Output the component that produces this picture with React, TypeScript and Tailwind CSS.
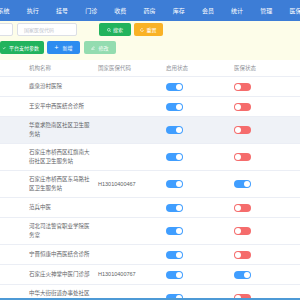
const navItems = ["系统", "执行", "挂号", "门诊", "收费", "药房", "库存", "会员", "统计", "管理", "医保"];

type Row = { name: string[]; code?: string; enabled: boolean; insured: boolean; active?: boolean };

const rows: Row[] = [
  { name: ["鹿泉汾村医院"], enabled: true, insured: false },
  { name: ["王安平中西医结合诊所"], enabled: true, insured: false },
  { name: ["华夏求隐南区社区卫生服", "务站"], enabled: true, insured: false, active: true },
  { name: ["石家庄市桥西区红旗南大", "街社区卫生服务站"], enabled: true, insured: false },
  { name: ["石家庄市桥西区东马路社", "区卫生服务站"], code: "H13010400467", enabled: true, insured: true },
  { name: ["范兵中医"], enabled: true, insured: false },
  { name: ["河北司法警官职业学院医", "务室"], enabled: true, insured: false },
  { name: ["宁晋恒康中西医结合诊所"], enabled: true, insured: false },
  { name: ["石家庄火神堂中医门诊部"], code: "H13010400767", enabled: true, insured: true },
  { name: ["中华大街街道办事处社区", "内社区卫生服务站"], enabled: true, insured: false },
];

function Toggle({ on, color }: { on: boolean; color: string }) {
  return (
    <div className={`w-[17px] h-[8px] rounded-full flex items-center px-[1px] ${color} ${on ? "justify-end" : "justify-start"}`}>
      <div className="w-[6px] h-[6px] rounded-full bg-white" />
    </div>
  );
}

export default function App() {
  return (
    <div className="w-[300px] h-[300px] overflow-hidden flex flex-col bg-white font-['Noto_Sans_CJK_SC','Noto_Sans',sans-serif]">
      <div className="h-[21px] shrink-0 bg-[#3d7dd6] flex items-center overflow-hidden">
        <div className="flex -ml-[11px]">
          {navItems.map((n) => (
            <div key={n} className="w-[29.2px] shrink-0 text-center text-[6px] leading-[8px] text-white">
              {n}
            </div>
          ))}
        </div>
      </div>

      <div className="shrink-0 bg-[#fdfde9] pt-[2px] pb-[6px] overflow-hidden">
        <div className="flex items-center h-[13px]">
          <div className="-ml-[27px] w-[40px] h-full shrink-0 bg-white border border-[#dcdfe6] rounded-[2px]" />
          <div className="ml-[4px] w-[60px] h-full shrink-0 bg-white border border-[#dcdfe6] rounded-[2px] flex items-center pl-[6px] text-[5px] text-[#c0c4cc]">
            国家医保代码
          </div>
          <button className="ml-[22px] w-[32px] h-full shrink-0 bg-[#22b35d] rounded-[2px] flex items-center justify-center gap-[2px] text-[5px] text-white">
            <svg width="4" height="4" viewBox="0 0 10 10" fill="none" stroke="white" strokeWidth="1.5">
              <circle cx="4.5" cy="4.5" r="3.3" />
              <path d="M7 7 L9.3 9.3" />
            </svg>
            搜索
          </button>
          <button className="ml-[3px] w-[29px] h-full shrink-0 bg-[#f9b226] rounded-[2px] flex items-center justify-center gap-[2px] text-[5px] text-white">
            <svg width="4" height="4" viewBox="0 0 10 10" fill="none" stroke="white" strokeWidth="1.5">
              <path d="M8.5 5 A3.5 3.5 0 1 1 7 2.2" />
            </svg>
            重置
          </button>
        </div>
        <div className="flex items-center h-[13px] mt-[5px]">
          <button className="w-[44px] h-full shrink-0 bg-[#22b35d] rounded-[2px] flex items-center pl-[2px] gap-[3px] text-[5px] text-white">
            <svg width="4" height="4" viewBox="0 0 10 10" fill="none" stroke="white" strokeWidth="1.5">
              <path d="M2 5 L4.3 7.3 L8.5 2.5" />
            </svg>
            平台支付参数
          </button>
          <button className="ml-[3px] w-[33px] h-full shrink-0 bg-[#2d8cf0] rounded-[2px] flex items-center justify-center gap-[4px] text-[5px] text-white">
            <span className="text-[7px] leading-none">+</span>
            新增
          </button>
          <button className="ml-[4px] w-[32px] h-full shrink-0 bg-[#93dcb0] rounded-[2px] flex items-center justify-center gap-[3px] text-[5px] text-white">
            <svg width="4" height="4" viewBox="0 0 10 10" fill="none" stroke="white" strokeWidth="1.4">
              <path d="M2 8 L2.5 6 L7 1.5 L8.5 3 L4 7.5 Z" />
              <path d="M1 9.3 H9" />
            </svg>
            修改
          </button>
        </div>
      </div>

      <div className="flex-1 overflow-hidden text-[5.5px]">
        <div className="grid grid-cols-[22px_69px_68px_68px_1fr] items-center h-[17px] border-b border-[#ebeef5] text-[#909399]">
          <div />
          <div className="pl-[7px]">机构名称</div>
          <div className="pl-[7px]">国家医保代码</div>
          <div className="pl-[7px]">启用状态</div>
          <div className="pl-[7px]">医保状态</div>
        </div>
        {rows.map((r, i) => (
          <div
            key={i}
            className={`grid grid-cols-[22px_69px_68px_68px_1fr] items-center min-h-[20px] py-[4px] border-b border-[#ebeef5] text-[#606266] ${r.active ? "bg-[#eff2f7]" : ""}`}
          >
            <div />
            <div className="pl-[7px] leading-[9px]">
              {r.name.map((l, j) => (
                <div key={j}>{l}</div>
              ))}
            </div>
            <div className="pl-[7px] font-['Liberation_Sans',sans-serif]">{r.code ?? ""}</div>
            <div className="pl-[7px]">
              <Toggle on={r.enabled} color="bg-[#409eff]" />
            </div>
            <div className="pl-[7px]">
              <Toggle on={r.insured} color={r.insured ? "bg-[#409eff]" : "bg-[#f56c6c]"} />
            </div>
          </div>
        ))}
      </div>
      <div className="h-[2px] shrink-0 bg-[#4d9ad6]" />
    </div>
  );
}
